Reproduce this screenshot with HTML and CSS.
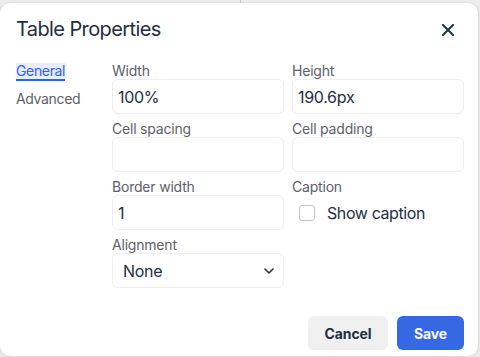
FILE: index.html
```html
<!DOCTYPE html>
<html>
<head>
<meta charset="utf-8">
<link rel="stylesheet" href="styles.css">
</head>
<body>
<div class="page">
  <div class="backdrop-line"></div>
</div>
<div class="dialog">
  <div class="header">
    <div class="title">Table Properties</div>
    <button class="close" aria-label="Close">
      <svg width="12" height="12" viewBox="0 0 12 12"><path d="M1 1 L11 11 M11 1 L1 11" stroke="#222f3e" stroke-width="2" stroke-linecap="round"/></svg>
    </button>
  </div>
  <div class="body">
    <div class="tabs">
      <div class="tab active"><span>General</span></div>
      <div class="tab">Advanced</div>
    </div>
    <div class="grid">
      <div class="field"><label class="lbl">Width</label><div class="input">100%</div></div>
      <div class="field"><label class="lbl">Height</label><div class="input">190.6px</div></div>
      <div class="field"><label class="lbl">Cell spacing</label><div class="input"></div></div>
      <div class="field"><label class="lbl">Cell padding</label><div class="input"></div></div>
      <div class="field"><label class="lbl">Border width</label><div class="input">1</div></div>
      <div class="field"><label class="lbl">Caption</label><div class="check"><span class="box"></span><span>Show caption</span></div></div>
      <div class="field"><label class="lbl">Alignment</label><div class="input select"><span>None</span>
        <svg width="10" height="6" viewBox="0 0 10 6"><path d="M1 1 L5 5 L9 1" fill="none" stroke="#222f3e" stroke-width="1.6" stroke-linecap="round" stroke-linejoin="round"/></svg></div></div>
    </div>
  </div>
  <div class="footer">
    <button class="btn secondary">Cancel</button>
    <button class="btn primary">Save</button>
  </div>
</div>
</body>
</html>
```
FILE: styles.css
```css
* { box-sizing: border-box; }
html, body { margin: 0; padding: 0; }
body {
  width: 480px;
  height: 357px;
  overflow: hidden;
  background: #e9e9e9;
  font-family: Inter, "Noto Sans", sans-serif;
  color: #222f3e;
  position: relative;
}
.page {
  position: absolute;
  left: 0; top: 0; width: 480px; height: 6px;
  background: #ececec;
}
.backdrop-line {
  position: absolute; left: 240px; top: 0; width: 1px; height: 6px; background: #c8c8c8;
}
.dialog {
  position: absolute;
  left: 0; top: 3px;
  width: 478px;
  height: 353px;
  background: #fff;
  border-radius: 10px;
  box-shadow: 0 0 2px rgba(0,0,0,0.15);
  display: flex;
  flex-direction: column;
}
.header {
  display: flex;
  align-items: center;
  justify-content: space-between;
  padding: 9px 14px 0 16px;
  height: 42px;
}
.title {
  font-size: 20px;
  line-height: 28px;
  font-weight: 400;
  letter-spacing: -0.6px;
}
.close {
  border: 0; background: none; padding: 0;
  width: 24px; height: 24px;
  display: flex; align-items: center; justify-content: center;
  margin-right: 4px;
  margin-top: 2px;
}
.body {
  display: flex;
  align-items: flex-start;
  padding: 18px 14px 0 16px;
  flex: 1;
}
.tabs {
  width: 96px;
  display: flex;
  flex-direction: column;
  font-size: 14px;
  letter-spacing: -0.35px;
}
.tab {
  height: 28px;
  line-height: 16px;
  color: #5c6168;
}
.tab.active span {
  color: #335dff;
  background: #e5eeff;
  border-bottom: 2px solid #2e62e8;
  display: inline-block;
  padding-bottom: 0;
}
.grid {
  display: grid;
  grid-template-columns: 172px 172px;
  column-gap: 8px;
  align-content: start;
}
.field {
  display: flex;
  flex-direction: column;
  margin-bottom: 7px;
}
.lbl {
  font-size: 14px;
  line-height: 16px;
  color: #5c6168;
  letter-spacing: -0.2px;
}
.input {
  height: 35px;
  border: 1px solid #eeeeee;
  border-radius: 6px;
  padding: 0 6px 0 5px;
  font-size: 16px;
  letter-spacing: -0.3px;
  display: flex;
  align-items: center;
  color: #222f3e;
}
.select {
  justify-content: space-between;
  padding: 0 9px 0 10px;
}
.check {
  height: 35px;
  display: flex;
  align-items: center;
  gap: 12px;
  padding-left: 7px;
  font-size: 16px;
  letter-spacing: -0.4px;
}
.box {
  width: 16px; height: 16px;
  border: 1px solid #c6c6c6;
  border-radius: 3px;
  background: #fff;
}
.footer {
  display: flex;
  justify-content: flex-end;
  gap: 9px;
  padding: 0 14px 6px 16px;
}
.btn {
  height: 34px;
  border: 0;
  border-radius: 6px;
  font-family: Inter, "Noto Sans", sans-serif;
  font-size: 14px;
  font-weight: 700;
  letter-spacing: -0.1px;
  padding: 0 16px;
}
.secondary { background: #f0f0f0; color: #222f3e; width: 80px; }
.primary { background: #3568e2; color: #fff; width: 67px; }
```
